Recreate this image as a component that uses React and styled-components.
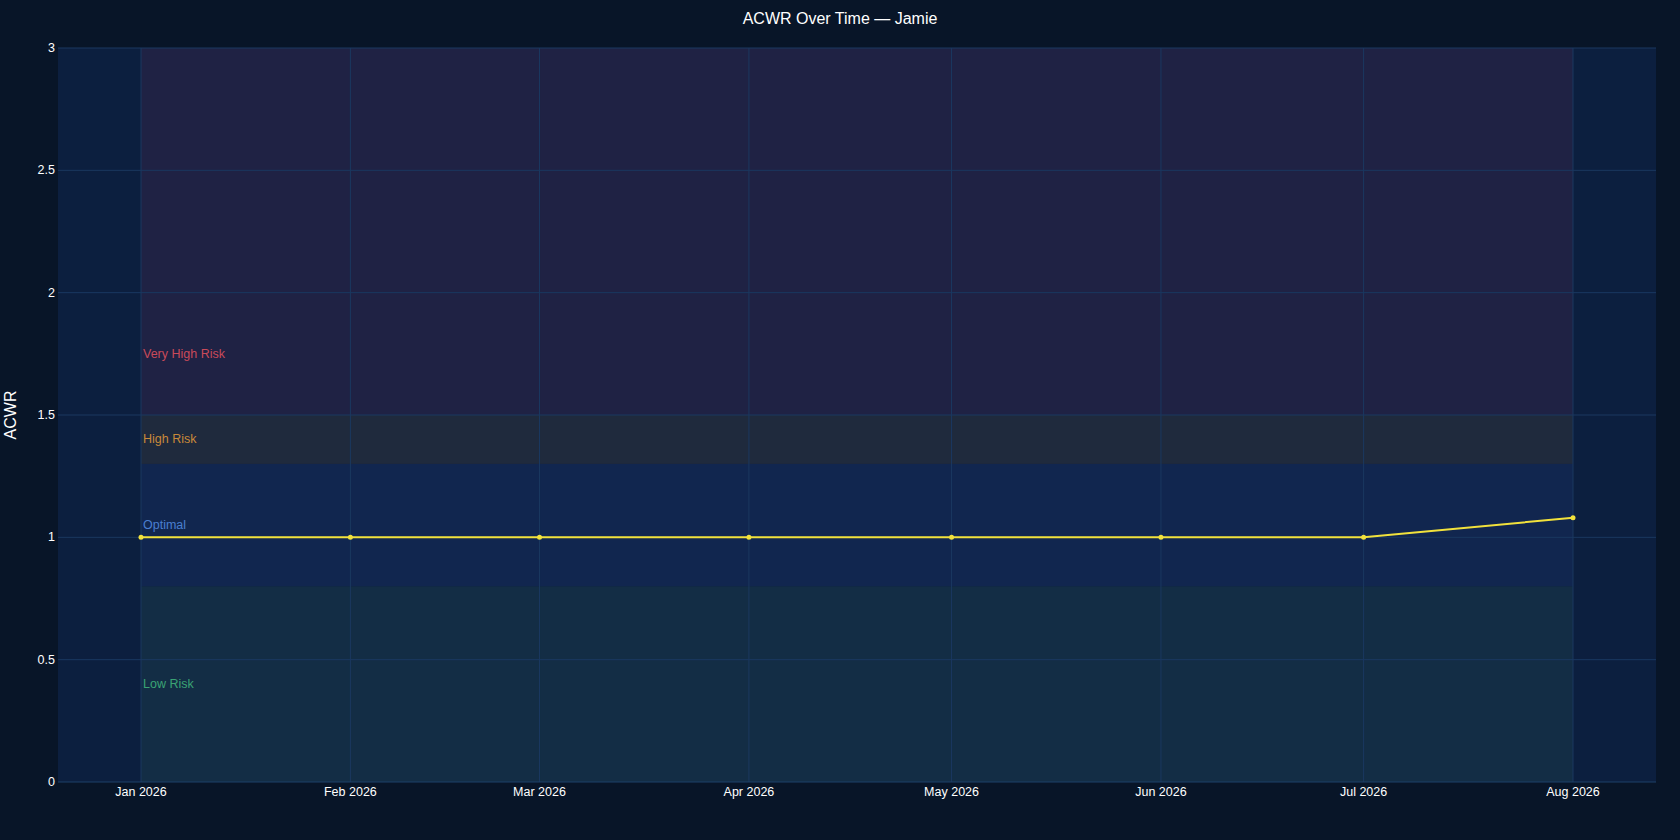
import React from "react";
import styled, { createGlobalStyle } from "styled-components";

const Global = createGlobalStyle`
  html, body { margin: 0; padding: 0; background: #081528; }
  body { font-family: "Liberation Sans", Arial, sans-serif; }
`;

const Page = styled.div`
  width: 1680px;
  height: 840px;
  background: #081528;
  overflow: hidden;
`;

const Chart = styled.svg`
  display: block;
  font-family: "Liberation Sans", Arial, sans-serif;
`;

const L = 58, R = 1656, T = 48, B = 782;
const yS = (v) => B - (v / 3) * (B - T);
const x0 = 141, perDay = (1573 - 141) / 212;
const months = [
  ["Jan 2026", 0], ["Feb 2026", 31], ["Mar 2026", 59], ["Apr 2026", 90],
  ["May 2026", 120], ["Jun 2026", 151], ["Jul 2026", 181], ["Aug 2026", 212],
];
const xS = (d) => x0 + d * perDay;
const data = months.map(([, d], i) => [xS(d), yS(i === 7 ? 1.08 : 1)]);
const zones = [
  [0, 0.8, "#132d45"], [0.8, 1.3, "#11264f"], [1.3, 1.5, "#1f2a3d"], [1.5, 3, "#1f2244"],
];
const zoneLabels = [
  ["Very High Risk", 358, "#c94a5a"], ["High Risk", 443, "#c8893a"],
  ["Optimal", 529, "#4a7fd0"], ["Low Risk", 688, "#3aa374"],
];

export default function App() {
  const xEnd = xS(212);
  return (
    <Page>
      <Global />
      <Chart width="1680" height="840" viewBox="0 0 1680 840">
        <text x="840" y="24" fill="#fff" fontSize="16" textAnchor="middle">ACWR Over Time — Jamie</text>
        <rect x={L} y={T} width={R - L} height={B - T} fill="#0c1f3f" />
        {zones.map(([a, b, c]) => (
          <rect key={a} x={x0} y={yS(b)} width={xEnd - x0} height={yS(a) - yS(b)} fill={c} />
        ))}
        {[0.5, 1, 1.5, 2, 2.5, 3].map((v) => (
          <line key={v} x1={L} x2={R} y1={yS(v)} y2={yS(v)} stroke="#1a3860" strokeWidth="1" />
        ))}
        {months.map(([m, d]) => (
          <line key={m} x1={xS(d)} x2={xS(d)} y1={T} y2={B} stroke="#1a3860" strokeWidth="1" />
        ))}
        <line x1={L} x2={R} y1={B} y2={B} stroke="#1d4068" strokeWidth="1" />
        {[0, 0.5, 1, 1.5, 2, 2.5, 3].map((v) => (
          <text key={v} x="55" y={yS(v) + 4} fill="#fff" fontSize="12.5" textAnchor="end">{v}</text>
        ))}
        {months.map(([m, d]) => (
          <text key={m} x={xS(d)} y="796" fill="#fff" fontSize="12.5" textAnchor="middle">{m}</text>
        ))}
        <text transform="translate(16 415) rotate(-90)" fill="#fff" fontSize="16" textAnchor="middle">ACWR</text>
        {zoneLabels.map(([t, y, c]) => (
          <text key={t} x="143" y={y} fill={c} fontSize="12.5">{t}</text>
        ))}
        <polyline points={data.map((p) => p.join(",")).join(" ")} fill="none" stroke="#f2e23c" strokeWidth="2" />
        {data.map(([x, y], i) => (
          <circle key={i} cx={x} cy={y} r="2.5" fill="#f2e23c" />
        ))}
      </Chart>
    </Page>
  );
}
